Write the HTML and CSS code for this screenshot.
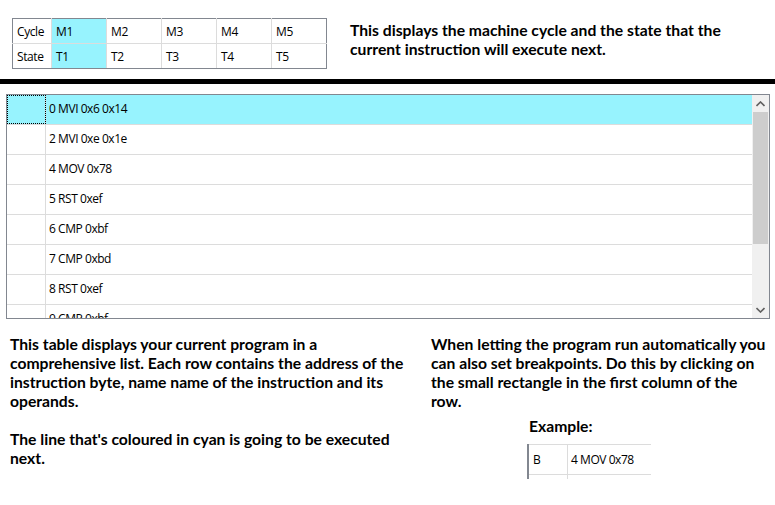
FILE: index.html
```html
<!DOCTYPE html>
<html>
<head>
<meta charset="utf-8">
<link rel="stylesheet" href="styles.css">
</head>
<body>
<div class="top">
  <table class="cycle">
    <tr><td class="head">Cycle</td><td class="on">M1</td><td>M2</td><td>M3</td><td>M4</td><td>M5</td></tr>
    <tr><td class="head">State</td><td class="on">T1</td><td>T2</td><td>T3</td><td>T4</td><td>T5</td></tr>
  </table>
  <p class="note desc">This displays the machine cycle and the state that the current instruction will execute next.</p>
</div>
<div class="rule"></div>
<div class="grid">
  <div class="rows">
    <div class="row current"><div class="bp focus"></div><div class="ins">0 MVI 0x6 0x14</div></div>
    <div class="row"><div class="bp"></div><div class="ins">2 MVI 0xe 0x1e</div></div>
    <div class="row"><div class="bp"></div><div class="ins">4 MOV 0x78</div></div>
    <div class="row"><div class="bp"></div><div class="ins">5 RST 0xef</div></div>
    <div class="row"><div class="bp"></div><div class="ins">6 CMP 0xbf</div></div>
    <div class="row"><div class="bp"></div><div class="ins">7 CMP 0xbd</div></div>
    <div class="row"><div class="bp"></div><div class="ins">8 RST 0xef</div></div>
    <div class="row"><div class="bp"></div><div class="ins">9 CMP 0xbf</div></div>
  </div>
  <div class="scrollbar">
    <div class="sbtn"><svg width="9" height="6" viewBox="0 0 9 6"><path d="M0.5 5 L4.5 1 L8.5 5" fill="none" stroke="#606060" stroke-width="1.6"/></svg></div>
    <div class="thumb"></div>
    <div class="track"></div>
    <div class="sbtn"><svg width="9" height="6" viewBox="0 0 9 6"><path d="M0.5 1 L4.5 5 L8.5 1" fill="none" stroke="#606060" stroke-width="1.6"/></svg></div>
  </div>
</div>
<div class="bottom">
  <div class="col left">
    <p class="note">This table displays your current program in a comprehensive list. Each row contains the address of the instruction byte, name name of the instruction and its operands.</p>
    <p class="note">The line that's coloured in cyan is going to be executed next.</p>
  </div>
  <div class="col right">
    <p class="note">When letting the program run automatically you can also set breakpoints. Do this by clicking on the small rectangle in the first column of the row.</p>
    <p class="note example-title">Example:</p>
    <div class="example">
      <div class="ex-row"><div class="ex-bp">B</div><div class="ex-ins">4 MOV 0x78</div></div>
      <div class="ex-row ex-cut"><div class="ex-bp"></div><div class="ex-ins"></div></div>
    </div>
  </div>
</div>
</body>
</html>
```

FILE: styles.css
```css
* { box-sizing: border-box; }
html, body { margin: 0; padding: 0; background: #fff; }
body {
  width: 775px;
  height: 505px;
  overflow: hidden;
  font-family: "Open Sans", "Noto Sans", sans-serif;
  color: #000;
}

.note {
  margin: 0;
  font-family: Lato, "Open Sans", sans-serif;
  font-weight: 700;
  font-size: 15.7px;
  line-height: 19px;
  color: #000;
}

.top {
  display: flex;
  align-items: flex-start;
  padding: 18px 0 0 12px;
}

.cycle {
  border-collapse: collapse;
  border: 1px solid #828790;
  font-size: 12px;
  font-family: "Open Sans", sans-serif;
}
.cycle td {
  height: 25px;
  width: 55px;
  padding: 0 0 0 4px;
  border: 1px solid #dcdcdc;
  vertical-align: middle;
  letter-spacing: -0.4px;
}
.cycle td.head { width: 39px; padding-left: 4px; }
.cycle td.on { background: #97f3fe; }
.cycle tr:first-child td { border-top-color: #828790; }
.cycle tr:last-child td { border-bottom-color: #828790; }
.cycle td:first-child { border-left-color: #828790; }
.cycle td:last-child { border-right-color: #828790; }

.desc {
  margin-left: 23px;
  margin-top: 3px;
  width: 410px;
}

.rule {
  height: 5px;
  background: #000;
  margin-top: 10px;
}

.grid {
  margin: 10px 0 0 6px;
  width: 764px;
  height: 225px;
  border: 1px solid #828790;
  display: flex;
}
.rows {
  flex: 1;
  overflow: hidden;
}
.row {
  display: flex;
  height: 30px;
  border-bottom: 1px solid #dcdcdc;
  font-family: "Open Sans", sans-serif;
  font-size: 12px;
  letter-spacing: -0.45px;
}
.row.current { background: #97f3fe; }
.bp {
  width: 39px;
  border-right: 1px solid #dcdcdc;
  flex: none;
}
.bp.focus {
  outline: 1px dotted #000;
  outline-offset: -1px;
}
.ins {
  padding-left: 3px;
  line-height: 28px;
}

.scrollbar {
  width: 17px;
  flex: none;
  background: #f0f0f0;
  display: flex;
  flex-direction: column;
}
.sbtn {
  height: 17px;
  display: flex;
  align-items: center;
  justify-content: center;
}
.thumb {
  height: 132px;
  margin: 0 1px;
  background: #cdcdcd;
}
.track { flex: 1; }

.bottom {
  display: flex;
  padding: 16px 0 0 10px;
}
.col.left { width: 402px; }
.col.left .note + .note { margin-top: 19px; }
.col.right { margin-left: 19px; width: 337px; }

.example-title {
  margin-top: 6px;
  margin-left: 98px;
}
.example {
  margin: 8px 0 0 96px;
  width: 124px;
  border-left: 2px solid #828790;
}
.ex-row {
  display: flex;
  height: 30px;
  border-top: 1px solid #dcdcdc;
  font-family: "Open Sans", sans-serif;
  font-size: 12px;
  letter-spacing: -0.45px;
}
.ex-row.ex-cut { height: 5px; }
.ex-bp {
  width: 39px;
  padding-left: 4px;
  line-height: 29px;
  border-right: 1px solid #dcdcdc;
}
.ex-ins {
  padding-left: 3px;
  line-height: 29px;
}
```
